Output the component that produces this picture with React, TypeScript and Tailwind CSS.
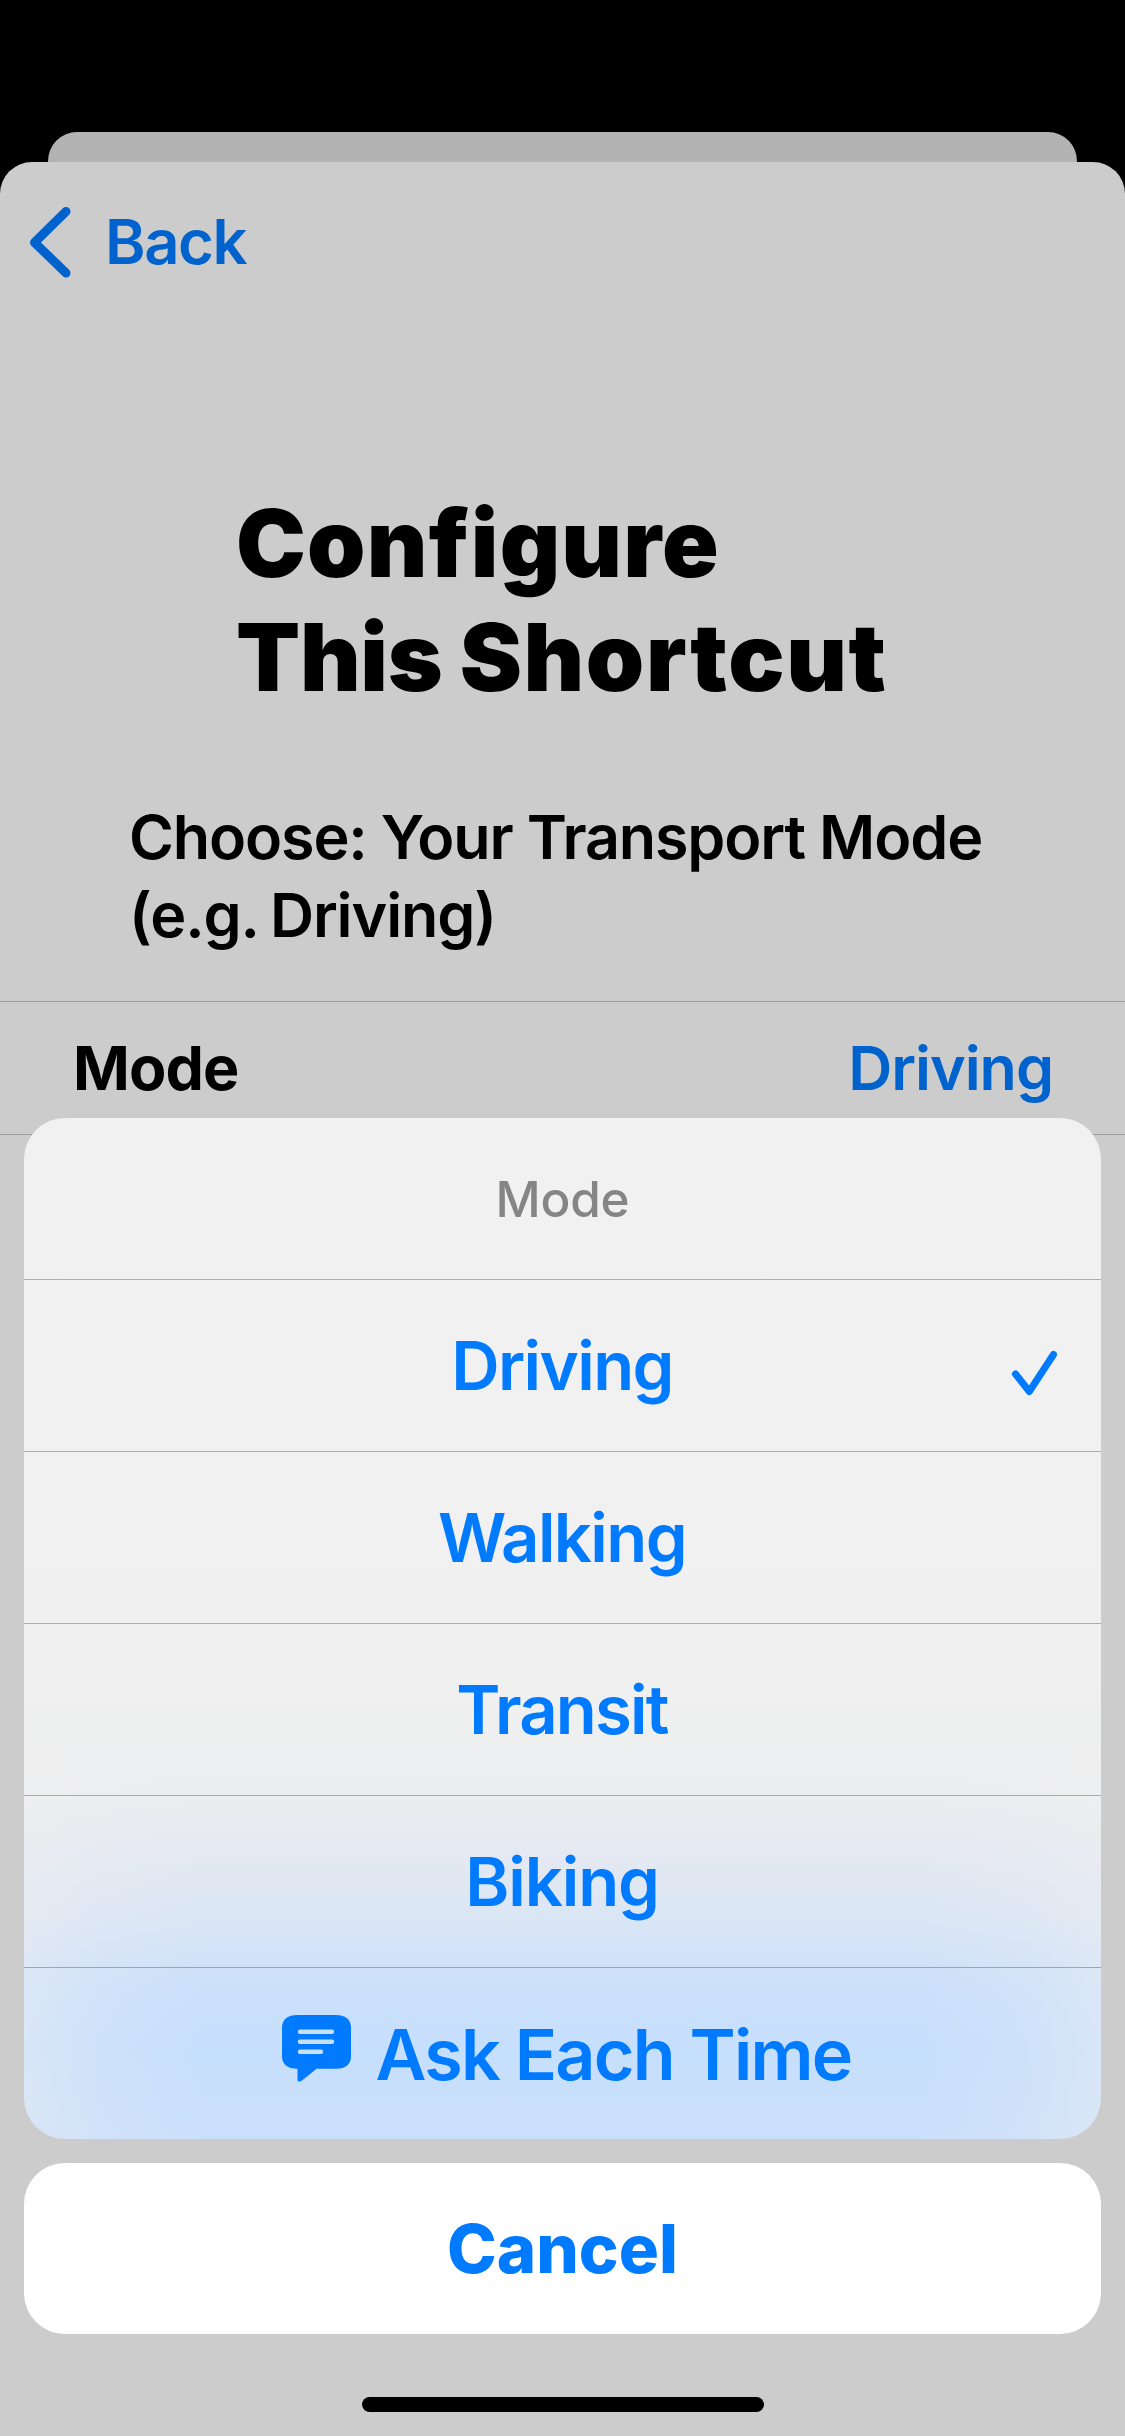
type Option = { label: string; tracking: string; checked?: boolean };

const options: Option[] = [
  { label: 'Driving', tracking: 'tracking-[-1.6px]', checked: true },
  { label: 'Walking', tracking: 'tracking-[-1.6px]' },
  { label: 'Transit', tracking: 'tracking-[-1.8px]' },
  { label: 'Biking', tracking: 'tracking-[-1.1px]' },
];

function ChevronLeft() {
  return (
    <svg width="44" height="72" viewBox="0 0 44 72" fill="none" className="shrink-0">
      <path d="M38 5.5 6.5 36.5 38 67" stroke="#0062cc" strokeWidth="9" strokeLinecap="round" strokeLinejoin="round" />
    </svg>
  );
}

function Check() {
  return (
    <svg width="48" height="48" viewBox="0 0 48 48" fill="none">
      <path d="M5.5 25 19.3 42.5 43.5 5.5" stroke="#007aff" strokeWidth="7" strokeLinecap="round" strokeLinejoin="round" />
    </svg>
  );
}

function TextBubble() {
  return (
    <svg width="69" height="67" viewBox="0 0 69 67" fill="none" className="shrink-0">
      <path
        d="M15 0H54C64 0 69 6 69 15V49C69 58 64 64 54 64H34.5L20 78C18 80 15.5 79.5 15.5 77V64C5 64 0 58 0 49V15C0 6 5 0 15 0Z"
        transform="scale(1 .84)"
        fill="#007aff"
      />
      <path d="M18 16.8H50M18 26.7H50M18 36.7H39" stroke="#c8dffc" strokeWidth="4.4" strokeLinecap="round" />
    </svg>
  );
}

export default function App() {
  return (
    <div className="relative flex h-[2436px] w-[1125px] flex-col overflow-hidden bg-black pt-[132px] font-['Inter',sans-serif] antialiased">
      <div className="mx-12 h-[30px] shrink-0 rounded-t-[29px] bg-[#b3b3b3]" />
      <main className="flex-1 rounded-t-[32px] bg-[#ccc]">
        <header className="flex h-[159px] items-center pl-7 text-[61.5px] font-semibold tracking-[-1.4px] text-[#0062cc]">
          <ChevronLeft />
          <span className="mt-px ml-[33px]">Back</span>
        </header>

        <h1 className="mt-[165px] pl-[236px] text-[93.5px] leading-[114px] font-black tracking-[1.2px] text-black">
          Configure
          <br />
          <span className="tracking-[-0.3px] [word-spacing:-1px]">This </span>
          <span className="tracking-[1.6px]">Shortcut</span>
        </h1>

        <p className="mt-[84px] pl-[129px] text-[61px] leading-[78px] font-semibold tracking-[-1.14px] text-black">
          Choose: Your Transport Mode
          <br />
          <span className="tracking-[-1.1px] [word-spacing:-2px]">(e.g. Driving)</span>
        </p>

        <div className="mt-[47px] flex h-[134px] items-center justify-between border-y border-[#9e9e9e] pt-px pr-[72px] pl-[73px] text-[61px]">
          <span className="font-bold tracking-[-0.9px] text-black">Mode</span>
          <span className="font-semibold tracking-[-1.05px] text-[#0062cc]">Driving</span>
        </div>
      </main>

      <div className="absolute inset-x-6 top-[1118px] flex flex-col gap-6">
        <section className="flex flex-col overflow-hidden rounded-[41px] bg-[linear-gradient(90deg,rgba(240,240,240,0.42),rgba(240,240,240,0.18)_7%,transparent_17%,transparent_83%,rgba(240,240,240,0.18)_93%,rgba(240,240,240,0.42)),linear-gradient(180deg,#f1f1f1_0%,#f0f0f0_55%,#eeefef_61%,#ecedf0_66.3%,#e5e9f2_71.7%,#dae6f5_78.5%,#cfe1f9_83.2%,#cae0fc_86.4%,#c6dffc_91.3%,#cbdffb_100%)]">
          <div className="flex h-[162px] items-center justify-center border-b border-[rgba(40,50,70,0.35)] pt-px text-[49.5px] font-medium tracking-[-0.22px] text-[#858585]">
            Mode
          </div>
          {options.map((option) => (
            <button
              key={option.label}
              className="relative flex h-[172px] items-center justify-center border-b border-[rgba(40,50,70,0.35)] pt-px pr-px text-[67px] font-semibold text-[#007aff]"
            >
              <span className={option.tracking}>{option.label}</span>
              {option.checked && (
                <span className="absolute top-[69px] right-[43px]">
                  <Check />
                </span>
              )}
            </button>
          ))}
          <button className="flex h-[171px] items-center justify-center gap-[25px] pt-0.5 pl-2 text-[70px] font-semibold tracking-[-1.8px] text-[#007aff]">
            <span className="-mt-[13px]">
              <TextBubble />
            </span>
            <span>Ask Each Time</span>
          </button>
        </section>

        <button className="flex h-[171px] items-center justify-center rounded-[41px] bg-white pt-px text-[67px] font-extrabold text-[#007aff]">
          Cancel
        </button>
      </div>

      <div className="absolute bottom-6 left-[362px] h-[15px] w-[402px] rounded-full bg-black" />
    </div>
  );
}
